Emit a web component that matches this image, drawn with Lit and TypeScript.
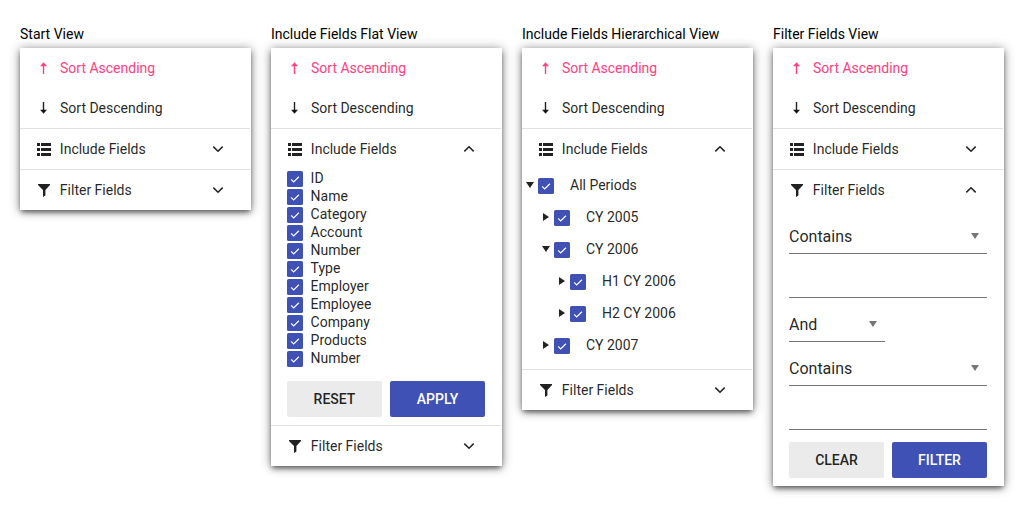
import { LitElement, html, css, svg, nothing } from "lit";
import { customElement, property } from "lit/decorators.js";
import { classMap } from "lit/directives/class-map.js";

type Mode = "start" | "flat" | "tree" | "filter";

const arrowUp = svg`<path d="M5.5 2v10"/><path d="M5.5 0.3L2 4.3h7z" class="solid"/>`;
const arrowDown = svg`<path d="M5.5 0v10"/><path d="M5.5 11.8L2 7.8h7z" class="solid"/>`;

@customElement("check-box")
class CheckBox extends LitElement {
  static styles = css`
    :host { display: block; width: 16px; height: 16px; flex: none; }
    svg { display: block; }
  `;
  render() {
    return html`<svg width="16" height="16" viewBox="0 0 16 16">
      <rect width="16" height="16" rx="1.6" fill="#3f51b5"/>
      <path d="M4.1 8.4l2.6 2.5L11.9 5.8" fill="none" stroke="#fff" stroke-width="1.2"/>
    </svg>`;
  }
}

@customElement("filter-panel")
class FilterPanel extends LitElement {
  @property() mode: Mode = "start";

  static styles = css`
    :host { display: block; width: 231px; background: #fff; color: rgba(0,0,0,.87);
      box-shadow: 0 3px 5px -1px rgba(0,0,0,.5), 0 1px 10px rgba(0,0,0,.45); }
    svg { display: block; flex: none; }
    .row { height: 40px; display: flex; align-items: center; padding: 0 27px 0 16px; line-height: 20px; }
    .ruled { border-top: 1px solid #e0e0e0; margin-right: 1px; padding-right: 26px; }
    .active { color: #ff4081; }
    .icon { width: 16px; margin-right: 8px; display: flex; justify-content: center; }
    .ruled .icon { margin-right: 7.85px; }
    .stroke { fill: none; stroke: currentColor; stroke-width: 1.4; }
    .solid { fill: currentColor; stroke: none; }
    .caption { flex: 1; }
    .flat { padding: 1px 16px 8px; }
    .item { height: 18px; display: flex; align-items: center; gap: 7.6px; line-height: 18px; }
    .item span { margin-top: -2px; }
    .buttons { display: flex; gap: 8px; }
    .button { width: 95px; height: 36px; border-radius: 2px; background: #ebebeb; font-weight: 500;
      line-height: 36px; text-align: center; }
    .primary { background: #3f51b5; color: #fff; }
    .tree { padding-bottom: 8px; }
    .node { height: 32px; display: flex; align-items: center; padding-left: 4px; line-height: 32px; }
    .depth1 { padding-left: 20px; }
    .depth2 { padding-left: 36px; }
    .node check-box { margin: 2px 16px 0 4px; }
    .form { padding: 0 17px 8px 16px; font-size: 16px; }
    .field { height: 43px; display: flex; align-items: center; border-bottom: 1px solid #757575;
      padding-right: 8px; }
    .field span { flex: 1; padding-top: 10px; line-height: 20px; }
    .field svg { margin-top: 8px; fill: #757575; }
    .short { width: 88px; }
    .form .buttons { font-size: 14px; padding-top: 12px; margin-right: -1px; }
    .flat .buttons { padding-top: 13px; }
  `;

  private chevron(open: boolean) {
    return html`<svg width="12" height="8" viewBox="0 0 12 8"><path fill="none" stroke="currentColor"
      stroke-width="1.5" d=${open ? "M1.3 6.4L6 1.8L10.7 6.4" : "M1.3 1.6L6 6.2L10.7 1.6"}/></svg>`;
  }

  private header(kind: "include" | "filter", open: boolean) {
    return html`<div class="row ruled">
      <span class="icon">${kind === "include"
        ? html`<svg width="14" height="13" viewBox="0 0 14 13" shape-rendering="crispEdges"><path class="solid"
            d="M0 0h3v3H0zM4 0h10v3H4zM0 5h3v3H0zM4 5h10v3H4zM0 10h3v3H0zM4 10h10v3H4z"/></svg>`
        : html`<svg width="12" height="13" viewBox="0 0 12 13"><path class="solid"
            d="M0 0h12v1L7.4 6V11.4L5 13V6L0 1z"/></svg>`}</span>
      <span class="caption">${kind === "include" ? "Include Fields" : "Filter Fields"}</span>
      ${this.chevron(open)}
    </div>`;
  }

  private sort(label: string, up: boolean) {
    return html`<div class=${classMap({ row: true, active: up })}>
      <span class="icon"><svg class="stroke" width="12" height="12" viewBox="0 0 12 12">${up ? arrowUp : arrowDown}</svg></span>
      <span class="caption">${label}</span>
    </div>`;
  }

  private flat() {
    const names = ["ID", "Name", "Category", "Account", "Number", "Type", "Employer", "Employee", "Company", "Products", "Number"];
    return html`<div class="flat">
      ${names.map((n) => html`<div class="item"><check-box></check-box><span>${n}</span></div>`)}
      ${this.buttons("RESET", "APPLY")}
    </div>`;
  }

  private tree() {
    const nodes: [string, number, boolean][] = [
      ["All Periods", 0, true], ["CY 2005", 1, false], ["CY 2006", 1, true],
      ["H1 CY 2006", 2, false], ["H2 CY 2006", 2, false], ["CY 2007", 1, false],
    ];
    return html`<div class="tree">${nodes.map(([n, depth, open]) => html`
      <div class=${classMap({ node: true, depth1: depth === 1, depth2: depth === 2 })}>
        <svg width="8" height="8" viewBox="0 0 8 8"><path class="solid" d=${open ? "M0 1h8L4 7z" : "M1 0v8l6-4z"}/></svg>
        <check-box></check-box><span>${n}</span>
      </div>`)}</div>`;
  }

  private field(label = "", short = false) {
    return html`<div class=${classMap({ field: true, short })}>
      <span>${label}</span>
      ${label ? html`<svg width="8" height="6" viewBox="0 0 8 6"><path d="M0 0h8L4 6z"/></svg>` : nothing}
    </div>`;
  }

  private buttons(a: string, b: string) {
    return html`<div class="buttons"><div class="button">${a}</div><div class="button primary">${b}</div></div>`;
  }

  render() {
    const { mode } = this;
    const include = mode === "flat" || mode === "tree";
    return html`
      ${this.sort("Sort Ascending", true)}
      ${this.sort("Sort Descending", false)}
      ${this.header("include", include)}
      ${mode === "flat" ? this.flat() : mode === "tree" ? this.tree() : nothing}
      ${this.header("filter", mode === "filter")}
      ${mode === "filter" ? html`<div class="form">
        ${this.field("Contains")}${this.field()}${this.field("And", true)}${this.field("Contains")}${this.field()}
        ${this.buttons("CLEAR", "FILTER")}
      </div>` : nothing}`;
  }
}

@customElement("app-root")
class AppRoot extends LitElement {
  static styles = css`
    :host { display: flex; align-items: flex-start; gap: 20px; box-sizing: border-box; width: 1024px; height: 526px;
      padding: 24px 20px; background: #fff; color: #000; font: 14px/20px Roboto, sans-serif; }
    .title { height: 24px; white-space: nowrap; }
    .view { width: 231px; }
  `;
  render() {
    const views: [string, Mode][] = [
      ["Start View", "start"], ["Include Fields Flat View", "flat"],
      ["Include Fields Hierarchical View", "tree"], ["Filter Fields View", "filter"],
    ];
    return views.map(([t, m]) => html`<div class="view"><div class="title">${t}</div><filter-panel mode=${m}></filter-panel></div>`);
  }
}
